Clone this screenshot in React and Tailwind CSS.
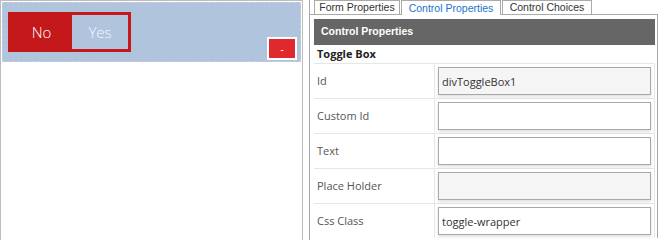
import React from 'react';

const rows = [
    { label: 'Id', value: 'divToggleBox1', readOnly: true },
    { label: 'Custom Id', value: '' },
    { label: 'Text', value: '' },
    { label: 'Place Holder', value: '', readOnly: true },
    { label: 'Css Class', value: 'toggle-wrapper' },
];

const tabs = [
    { name: 'Form Properties', width: 'w-[86px]' },
    { name: 'Control Properties', width: 'w-[100px]', active: true },
    { name: 'Control Choices', width: 'w-[90px]' },
];

const App = () => {
    return (
        <div className="flex w-[659px] h-[240px] overflow-hidden bg-white font-['Open_Sans',sans-serif]">
            {/* designer canvas */}
            <div className="w-[303px] h-[300px] shrink-0 border border-[#bdbdbd] p-px">
                <div className="h-[60px] border border-dashed border-[#c9ced6] bg-[#b0c4de] flex justify-between">
                    <div className="ml-[5px] mt-[9px] self-start w-[123px] h-[40px] border-[3px] border-[#c4181b] bg-[#c4181b] flex">
                        <div className="w-[61px] flex items-center justify-center text-[15px] font-light text-white">No</div>
                        <div className="w-[56px] bg-[#b0c4de] flex items-center justify-center text-[15px] font-light text-[#f4f6ff]">Yes</div>
                    </div>
                    <button className="self-end mr-[3px] mb-px w-[30px] h-[23px] border-2 border-white bg-[#e0282d] text-white text-[10px] leading-none flex items-center justify-center">
                        -
                    </button>
                </div>
            </div>

            {/* property panel */}
            <div className="ml-[6px] w-[349px] shrink-0 border-l border-[#aaaaaa] flex flex-col">
                <div className="h-[14px] pl-[4px] flex items-start gap-px font-['Liberation_Sans',Arial,sans-serif] text-[10.5px]">
                    {tabs.map((t) => (
                        <div
                            key={t.name}
                            className={`${t.width} border border-[#aaaaaa] flex items-center justify-center leading-none ${
                                t.active
                                    ? 'h-[15px] border-b-0 bg-white text-[#1c74c9] relative z-10'
                                    : 'h-[14px] border-b-0 bg-white text-[#333333]'
                            }`}
                        >
                            {t.name}
                        </div>
                    ))}
                </div>
                <div className="border-t border-r border-[#aaaaaa] pl-[4px] pr-[2px] pt-[4px]">
                    <div className="h-[26px] bg-[#666666] pl-[7px] flex items-center text-white font-bold text-[10.5px] font-['Liberation_Sans',Arial,sans-serif]">
                        Control Properties
                    </div>
                    <div className="h-[18px] pl-[3px] flex items-center font-bold text-[11px] text-[#222222]">
                        Toggle Box
                    </div>
                    {rows.map((r) => (
                        <div key={r.label} className="h-[35px] flex border-t border-r border-[#e6e6e6]">
                            <div className="w-[121px] shrink-0 border-r border-[#e6e6e6] pl-[3px] flex items-center text-[11px] text-[#555555]">
                                {r.label}
                            </div>
                            <div className="flex-1 pl-[3px] pr-[3px] flex items-center">
                                <input
                                    readOnly
                                    value={r.value}
                                    className={`w-[213px] h-[28px] border border-[#a8a8a8] px-[3px] text-[11px] text-[#333333] outline-none shadow-[0_2px_3px_rgba(0,0,0,0.12)] ${
                                        r.readOnly ? 'bg-[#f5f5f5]' : 'bg-white'
                                    }`}
                                />
                            </div>
                        </div>
                    ))}
                </div>
            </div>
        </div>
    );
};

export default App;
